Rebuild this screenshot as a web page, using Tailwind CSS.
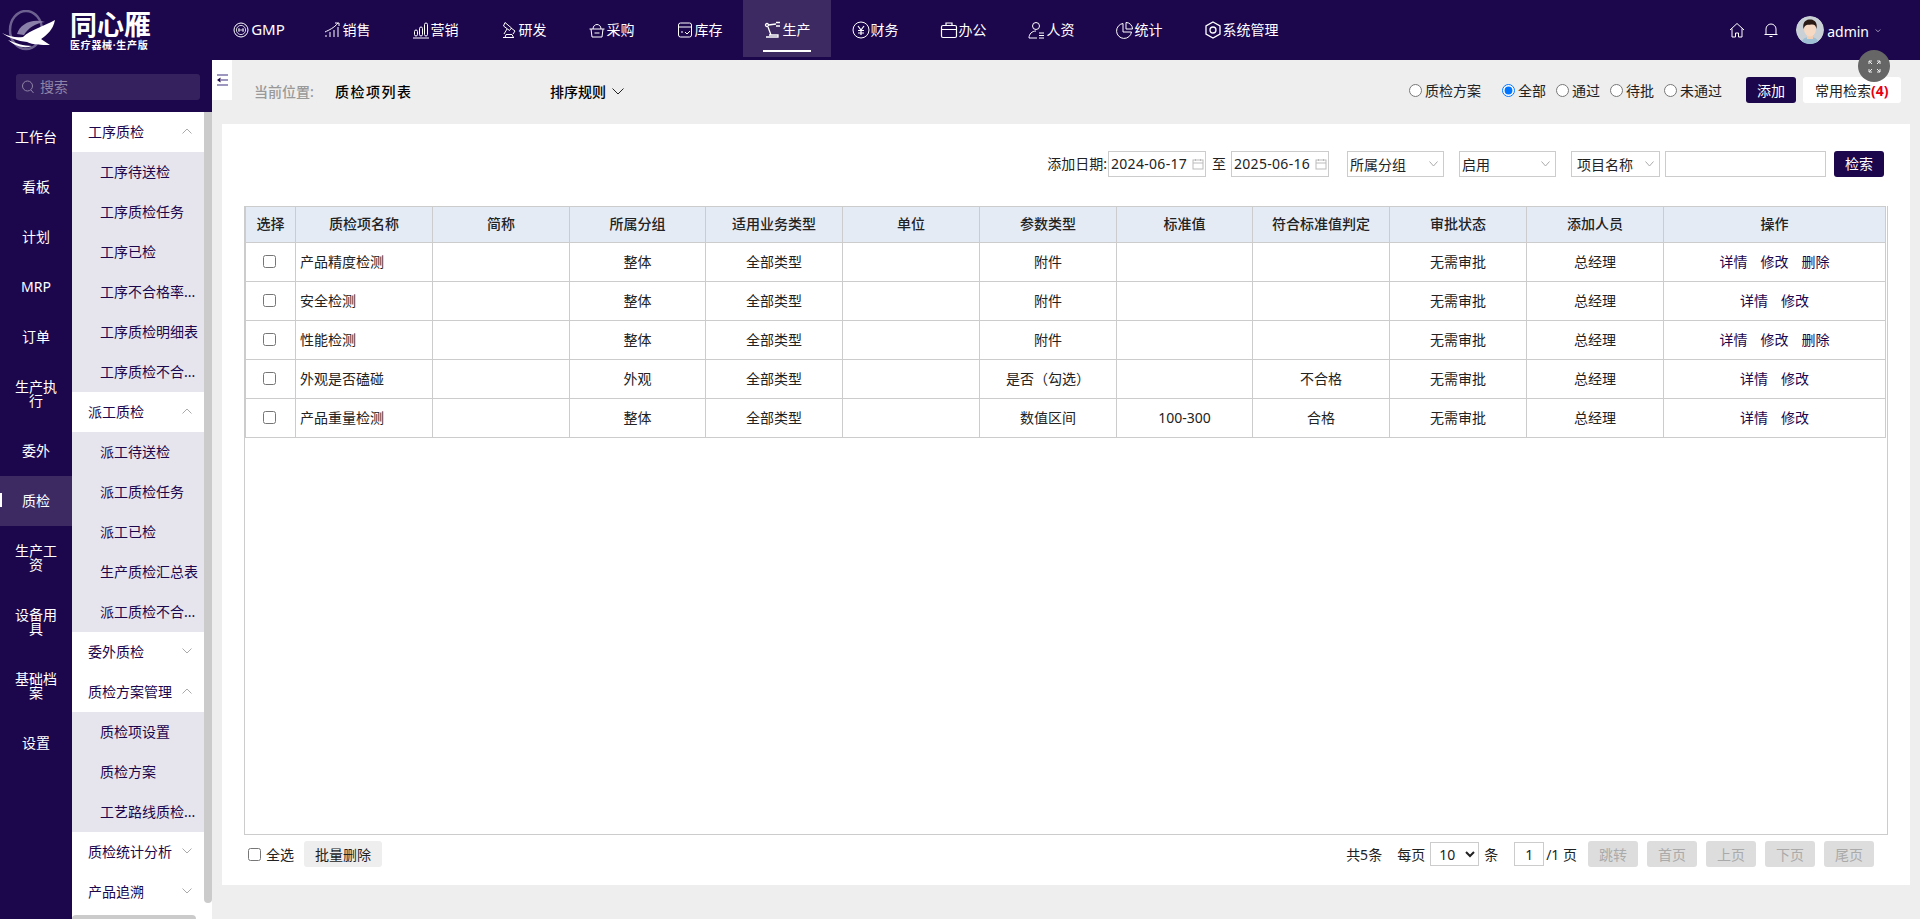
<!DOCTYPE html>
<html lang="zh">
<head>
<meta charset="utf-8">
<title>质检项列表</title>
<script src="https://cdn.jsdelivr.net/npm/@tailwindcss/browser@4"></script>
</head>
<body class="h-[919px] w-[1920px] overflow-hidden bg-[#eeeeee] text-[14px] text-[#222] font-['Noto_Sans','Noto_Sans_CJK_SC',sans-serif]">

<!-- top bar -->
<header class="flex h-[60px] items-center bg-[#1c064c] text-white">
  <div class="flex h-full w-[215px] shrink-0 items-start">
    <svg class="mt-[10px] h-[44px] w-[56px] shrink-0" viewBox="0 0 56 44" fill="none">
      <ellipse cx="26" cy="20" rx="16" ry="19" stroke="#6d6190" stroke-width="2.500"/>
      <path d="M17 24 C20 14 32 8 45 12 C36 13 28 18 24 25Z" fill="#8a7fa8"/>
      <path d="M2 23 C10 27 17 28 23 27 C30 20 44 16 55 10 C53 20 47 25 41 29 L50 35 C41 35 33 35 27 32 C18 31 9 28 2 23Z" fill="#fff"/>
      <path d="M8 30 C15 33 24 36 32 36 C24 39 15 36 8 30Z" fill="#fff"/>
    </svg>
    <div class="ml-[14px] w-[80px] pt-[13px]">
      <div class="text-[27px] font-bold leading-[24px] whitespace-nowrap">同心雁</div>
      <div class="mt-[3px] text-[10px] font-bold leading-[10px] tracking-[.7px] whitespace-nowrap">医疗器械·生产版</div>
    </div>
  </div>
  <nav class="flex h-full">
    <a class="flex h-[57px] w-[88px] items-center justify-center gap-[2px] pt-[2px]">
      <svg class="h-[16px] w-[16px]" viewBox="0 0 16 16" fill="none" stroke="#fff"><circle cx="8" cy="8" r="7"/><circle cx="8" cy="8" r="4.600" stroke-width=".8"/><path d="M5 8h6M6 6v4M10 6v4" stroke-width=".8"/></svg>
      <span class="text-[15px]">GMP</span>
    </a>
    <a class="flex h-[57px] w-[88px] items-center justify-center gap-[1px] pt-[2px]">
      <svg class="h-[18px] w-[18px]" viewBox="0 0 18 18" fill="none" stroke="#fff"><path d="M2 16v-2M6 16v-5M10 16V9M14 16V6M1 11C5 9 10 7 14 2M11 2h4v3"/></svg>
      <span>销售</span>
    </a>
    <a class="flex h-[57px] w-[88px] items-center justify-center gap-[1px] pt-[2px]">
      <svg class="h-[18px] w-[18px]" viewBox="0 0 18 18" fill="none" stroke="#fff"><rect x="2.500" y="9" width="3" height="6" rx="1.500"/><rect x="7.500" y="6" width="3" height="9" rx="1.500"/><rect x="12.500" y="2" width="3" height="13" rx="1.500"/><path d="M1 17h16"/></svg>
      <span>营销</span>
    </a>
    <a class="flex h-[57px] w-[88px] items-center justify-center gap-[1px] pt-[2px]">
      <svg class="h-[18px] w-[18px]" viewBox="0 0 18 18" fill="none" stroke="#fff"><path d="M5 1.500L3.500 5l6 4.500 2-2.500ZM7 8l-3 5M3 16.500h11M5 16.500l1-3h6l1.500 3M11 7l4 3-2 3"/></svg>
      <span>研发</span>
    </a>
    <a class="flex h-[57px] w-[88px] items-center justify-center gap-[1px] pt-[2px]">
      <svg class="h-[18px] w-[18px]" viewBox="0 0 18 18" fill="none" stroke="#fff"><path d="M1.500 8h15M3 8l1 8h10l1-8M5 8c0-6 8-6 8 0M6.500 12h5"/></svg>
      <span>采购</span>
    </a>
    <a class="flex h-[57px] w-[88px] items-center justify-center gap-[1px] pt-[2px]">
      <svg class="h-[18px] w-[18px]" viewBox="0 0 18 18" fill="none" stroke="#fff"><rect x="2.500" y="2" width="13" height="14" rx="2"/><path d="M2.500 6h13M5 11h2M9 11l2 2 3-3"/></svg>
      <span>库存</span>
    </a>
    <a class="relative flex h-[57px] w-[88px] items-center justify-center gap-[1px] bg-[#3d2a62] pt-[2px]">
      <svg class="h-[18px] w-[18px]" viewBox="0 0 18 18" fill="none" stroke="#fff" stroke-width="1.300"><circle cx="3" cy="4" r="1.500"/><path d="M4.500 4L12 3M12 1.500h4M12 5h4M4 6l3 8M2 16h12v-2H5"/></svg>
      <span>生产</span>
      <span class="absolute left-[20px] top-[50px] h-[2px] w-[48px] bg-white"></span>
    </a>
    <a class="flex h-[57px] w-[88px] items-center justify-center gap-[1px] pt-[2px]">
      <svg class="h-[18px] w-[18px]" viewBox="0 0 18 18" fill="none" stroke="#fff"><circle cx="9" cy="9" r="8"/><path d="M6 5l3 4 3-4M6 9.500h6M6 12h6M9 9v5" stroke-width="1.200"/></svg>
      <span>财务</span>
    </a>
    <a class="flex h-[57px] w-[88px] items-center justify-center gap-[1px] pt-[2px]">
      <svg class="h-[18px] w-[18px]" viewBox="0 0 18 18" fill="none" stroke="#fff" stroke-width="1.200"><rect x="1.500" y="4.500" width="15" height="12" rx="1.500"/><path d="M6 4.500V2h6v2.500M1.500 8.500h15"/></svg>
      <span>办公</span>
    </a>
    <a class="flex h-[57px] w-[88px] items-center justify-center gap-[1px] pt-[2px]">
      <svg class="h-[18px] w-[18px]" viewBox="0 0 18 18" fill="none" stroke="#fff"><circle cx="8" cy="5" r="3.500"/><path d="M1 17c0-4 3-7 7-7M1 17h8M11 12h5M11 14.500h5M11 17h5"/></svg>
      <span>人资</span>
    </a>
    <a class="flex h-[57px] w-[88px] items-center justify-center gap-[1px] pt-[2px]">
      <svg class="h-[18px] w-[18px]" viewBox="0 0 18 18" fill="none" stroke="#fff"><path d="M7 2.500a7.500 7.500 0 1 0 8.500 8.500"/><path d="M7 2.500V11h8.500"/><path d="M10 1.500a6.500 6.500 0 0 1 6.500 6.500H10Z"/></svg>
      <span>统计</span>
    </a>
    <a class="flex h-[57px] w-[116px] items-center justify-center gap-[1px] pt-[2px]">
      <svg class="h-[18px] w-[18px]" viewBox="0 0 18 18" fill="none" stroke="#fff" stroke-width="1.300"><path d="M9 1l7 4v8l-7 4-7-4V5Z"/><circle cx="9" cy="9" r="3"/></svg>
      <span>系统管理</span>
    </a>
  </nav>
  <div class="ml-auto flex items-center pr-[39px]">
    <svg class="h-[16px] w-[16px]" viewBox="0 0 16 16" fill="none" stroke="#fff"><path d="M1 8l7-6.500L15 8M3 6.500V15h3.500v-4h3v4H13V6.500"/></svg>
    <svg class="ml-[19px] h-[16px] w-[14px]" viewBox="0 0 14 16" fill="none" stroke="#fff"><path d="M2 12V7a5 5 0 0 1 10 0v5M.5 12.500h13M5.500 14.500h3"/></svg>
    <svg class="ml-[18px] h-[28px] w-[28px] rounded-full" viewBox="0 0 28 28">
      <circle cx="14" cy="14" r="14" fill="#c9d0d6"/>
      <path d="M5 28c1-6 5-7 9-7s8 1 9 7Z" fill="#9fc0d4"/>
      <rect x="11" y="16" width="6" height="7" fill="#f2cfb4"/>
      <ellipse cx="14" cy="13" rx="6" ry="7.500" fill="#f6d9c2"/>
      <path d="M7.500 13C6 5 11 3.500 14 3.500S22 5 20.500 13C20 9 18 8 15 8.500 12 9 9 8 7.500 13Z" fill="#2a1a14"/>
    </svg>
    <span class="ml-[3px] pt-[2px]">admin</span>
    <svg class="ml-[6px] mt-[2px] h-[6px] w-[6px]" viewBox="0 0 8 6" fill="none" stroke="#cfc9dc"><path d="M1 1l3 3 3-3"/></svg>
  </div>
</header>

<!-- fullscreen button -->
<div class="absolute left-[1858px] top-[50px] z-10 flex h-[32px] w-[32px] items-center justify-center rounded-full bg-[#666]">
  <svg class="h-[13px] w-[13px]" viewBox="0 0 13 13" fill="none" stroke="#eee"><path d="M1 4V1h3M9 1h3v3M1 9v3h3M12 9v3H9M1 1l3 3M12 1L9 4M1 12l3-3M12 12L9 9"/></svg>
</div>

<div class="flex h-[859px]">
  <!-- left menu -->
  <aside class="flex h-full w-[212px] shrink-0 flex-col">
    <div class="flex h-[52px] w-[212px] shrink-0 items-start bg-[#1c064c] pl-[16px] pt-[14px]">
      <div class="flex h-[26px] w-[184px] items-center rounded-[3px] bg-[#35215d] pl-[5px] text-[#8f84a8]">
        <svg class="h-[14px] w-[14px]" viewBox="0 0 14 14" fill="none" stroke="#8f84a8"><circle cx="6.500" cy="6" r="5"/><path d="M10 10l2.500 3"/></svg>
        <span class="ml-[5px] pb-[2px]">搜索</span>
      </div>
    </div>
    <div class="relative flex min-h-0 flex-1">
      <div class="flex w-[72px] shrink-0 flex-col bg-[#1c064c] text-center leading-[14px] text-white">
        <a class="flex h-[50px] items-center justify-center">工作台</a>
        <a class="flex h-[50px] items-center justify-center">看板</a>
        <a class="flex h-[50px] items-center justify-center">计划</a>
        <a class="flex h-[50px] items-center justify-center">MRP</a>
        <a class="flex h-[50px] items-center justify-center">订单</a>
        <a class="flex h-[64px] items-center justify-center px-[14px]">生产执行</a>
        <a class="flex h-[50px] items-center justify-center">委外</a>
        <a class="relative flex h-[50px] items-center justify-center bg-[#3d2a62]"><span class="absolute left-0 top-[17px] h-[14px] w-[2px] bg-white"></span>质检</a>
        <a class="flex h-[64px] items-center justify-center px-[14px]">生产工资</a>
        <a class="flex h-[64px] items-center justify-center px-[14px]">设备用具</a>
        <a class="flex h-[64px] items-center justify-center px-[14px]">基础档案</a>
        <a class="flex h-[50px] items-center justify-center">设置</a>
      </div>
      <div class="w-[132px] shrink-0 overflow-hidden bg-white text-[#1c064c] [&_div.flex]:pb-[2px]">
        <div class="flex h-[40px] items-center justify-between pl-[16px] pr-[12px]">工序质检<svg class="h-[6px] w-[10px]" viewBox="0 0 10 6" fill="none" stroke="#aaa"><path d="M.5 5.500L5 1l4.500 4.500"/></svg></div>
        <div class="bg-[#e6e5ee]">
          <div class="flex h-[40px] items-center pl-[28px] whitespace-nowrap">工序待送检</div>
          <div class="flex h-[40px] items-center pl-[28px] whitespace-nowrap">工序质检任务</div>
          <div class="flex h-[40px] items-center pl-[28px] whitespace-nowrap">工序已检</div>
          <div class="flex h-[40px] items-center pl-[28px] whitespace-nowrap">工序不合格率...</div>
          <div class="flex h-[40px] items-center pl-[28px] whitespace-nowrap">工序质检明细表</div>
          <div class="flex h-[40px] items-center pl-[28px] whitespace-nowrap">工序质检不合...</div>
        </div>
        <div class="flex h-[40px] items-center justify-between pl-[16px] pr-[12px]">派工质检<svg class="h-[6px] w-[10px]" viewBox="0 0 10 6" fill="none" stroke="#aaa"><path d="M.5 5.500L5 1l4.500 4.500"/></svg></div>
        <div class="bg-[#e6e5ee]">
          <div class="flex h-[40px] items-center pl-[28px] whitespace-nowrap">派工待送检</div>
          <div class="flex h-[40px] items-center pl-[28px] whitespace-nowrap">派工质检任务</div>
          <div class="flex h-[40px] items-center pl-[28px] whitespace-nowrap">派工已检</div>
          <div class="flex h-[40px] items-center pl-[28px] whitespace-nowrap">生产质检汇总表</div>
          <div class="flex h-[40px] items-center pl-[28px] whitespace-nowrap">派工质检不合...</div>
        </div>
        <div class="flex h-[40px] items-center justify-between pl-[16px] pr-[12px]">委外质检<svg class="h-[6px] w-[10px]" viewBox="0 0 10 6" fill="none" stroke="#aaa"><path d="M.5.500L5 5l4.500-4.500"/></svg></div>
        <div class="flex h-[40px] items-center justify-between pl-[16px] pr-[12px]">质检方案管理<svg class="h-[6px] w-[10px]" viewBox="0 0 10 6" fill="none" stroke="#aaa"><path d="M.5 5.500L5 1l4.500 4.500"/></svg></div>
        <div class="bg-[#e6e5ee]">
          <div class="flex h-[40px] items-center pl-[28px] whitespace-nowrap">质检项设置</div>
          <div class="flex h-[40px] items-center pl-[28px] whitespace-nowrap">质检方案</div>
          <div class="flex h-[40px] items-center pl-[28px] whitespace-nowrap">工艺路线质检...</div>
        </div>
        <div class="flex h-[40px] items-center justify-between pl-[16px] pr-[12px]">质检统计分析<svg class="h-[6px] w-[10px]" viewBox="0 0 10 6" fill="none" stroke="#aaa"><path d="M.5.500L5 5l4.500-4.500"/></svg></div>
        <div class="flex h-[40px] items-center justify-between pl-[16px] pr-[12px]">产品追溯<svg class="h-[6px] w-[10px]" viewBox="0 0 10 6" fill="none" stroke="#aaa"><path d="M.5.500L5 5l4.500-4.500"/></svg></div>
      </div>
      <!-- scrollbars -->
      <div class="w-[8px] shrink-0 bg-white"><div class="h-[791px] rounded-b-[4px] bg-[#cbcbcb]"></div></div>
      <div class="absolute bottom-0 left-[72px] h-[4px] w-[124px] rounded-t-[4px] bg-[#cbcbcb]"></div>
    </div>
  </aside>

  <!-- main -->
  <main class="relative min-w-0 flex-1">
    <button class="absolute left-0 top-0 flex h-[40px] w-[20px] items-center justify-center bg-white">
      <svg class="h-[14px] w-[11px]" viewBox="0 0 11 14" fill="#9d97c0"><rect y="1" width="11" height="2"/><rect x="4" y="6" width="7" height="2"/><rect y="11" width="11" height="2"/><path d="M0 7l3.500-2.500v5Z" fill="#1c064c"/></svg>
    </button>

    <div class="flex h-[60px] items-center pl-[42px] pr-[19px]">
      <span class="mt-[2px] w-[81px] font-medium text-[#999]">当前位置:</span>
      <span class="mt-[2px] w-[215px] font-medium tracking-[1.5px] text-black">质检项列表</span>
      <span class="mt-[2px] font-medium text-black">排序规则</span>
      <svg class="ml-[6px] mt-[2px] h-[7px] w-[12px]" viewBox="0 0 12 7" fill="none" stroke="#222"><path d="M.5.500L6 6l5.500-5.500"/></svg>
      <div class="ml-auto flex items-center">
        <label class="flex items-center"><input type="radio" name="kind" class="m-0 h-[13px] w-[13px]"><span class="ml-[3px]">质检方案</span></label>
        <label class="ml-[21px] flex items-center"><input type="radio" name="status" checked class="m-0 h-[13px] w-[13px]"><span class="ml-[3px]">全部</span></label>
        <label class="ml-[10px] flex items-center"><input type="radio" name="status" class="m-0 h-[13px] w-[13px]"><span class="ml-[3px]">通过</span></label>
        <label class="ml-[10px] flex items-center"><input type="radio" name="status" class="m-0 h-[13px] w-[13px]"><span class="ml-[3px]">待批</span></label>
        <label class="ml-[10px] flex items-center"><input type="radio" name="status" class="m-0 h-[13px] w-[13px]"><span class="ml-[3px]">未通过</span></label>
        <button class="ml-[24px] h-[26px] w-[50px] rounded-[3px] bg-[#1c064c] text-white">添加</button>
        <button class="ml-[7px] h-[26px] w-[98px] rounded-[3px] bg-white pl-[12px] text-left">常用检索<b class="text-[#e60012]">(4)</b></button>
      </div>
    </div>

    <section class="ml-[10px] mr-[10px] mt-[4px] h-[761px] bg-white pt-[27px]">
      <!-- filters -->
      <div class="flex h-[26px] items-center pr-[26px]">
        <span class="ml-auto pb-[2px]">添加日期:</span>
        <div class="relative ml-[1px] w-[98px]">
          <input value="2024-06-17" class="h-[26px] w-full border border-[#ccc] pb-[2px] pl-[2px] tracking-[.3px] outline-none">
          <svg class="absolute right-[2px] top-[7px] h-[12px] w-[12px]" viewBox="0 0 12 12" fill="none" stroke="#bbb"><rect x="1" y="2" width="10" height="9"/><path d="M1 5h10M3.500 1v2M8.500 1v2"/></svg>
        </div>
        <span class="ml-[6px] pb-[2px]">至</span>
        <div class="relative ml-[5px] w-[98px]">
          <input value="2025-06-16" class="h-[26px] w-full border border-[#ccc] pb-[2px] pl-[2px] tracking-[.3px] outline-none">
          <svg class="absolute right-[2px] top-[7px] h-[12px] w-[12px]" viewBox="0 0 12 12" fill="none" stroke="#bbb"><rect x="1" y="2" width="10" height="9"/><path d="M1 5h10M3.500 1v2M8.500 1v2"/></svg>
        </div>
        <div class="relative ml-[18px] w-[97px]">
          <select class="h-[26px] w-full appearance-none border border-[#ccc] bg-white pl-[2px]"><option>所属分组</option></select>
          <svg class="pointer-events-none absolute right-[6px] top-[10px] h-[6px] w-[9px]" viewBox="0 0 9 6" fill="none" stroke="#aaa"><path d="M.5.500l4 4.500 4-4.500"/></svg>
        </div>
        <div class="relative ml-[15px] w-[97px]">
          <select class="h-[26px] w-full appearance-none border border-[#ccc] bg-white pl-[2px]"><option>启用</option></select>
          <svg class="pointer-events-none absolute right-[6px] top-[10px] h-[6px] w-[9px]" viewBox="0 0 9 6" fill="none" stroke="#aaa"><path d="M.5.500l4 4.500 4-4.500"/></svg>
        </div>
        <div class="relative ml-[15px] w-[89px]">
          <select class="h-[26px] w-full appearance-none border border-[#ccc] bg-white pl-[5px]"><option>项目名称</option></select>
          <svg class="pointer-events-none absolute right-[6px] top-[10px] h-[6px] w-[9px]" viewBox="0 0 9 6" fill="none" stroke="#aaa"><path d="M.5.500l4 4.500 4-4.500"/></svg>
        </div>
        <input class="ml-[5px] h-[26px] w-[161px] border border-[#ccc] outline-none">
        <button class="ml-[8px] h-[26px] w-[50px] rounded-[3px] bg-[#1c064c] pb-[2px] text-white">检索</button>
      </div>

      <!-- table -->
      <div class="ml-[22px] mr-[22px] mt-[29px] h-[629px] border border-[#ccc] border-t-0">
        <table class="w-[1640px] table-fixed border-collapse text-center [&_td]:border [&_td]:border-[#ccc] [&_td]:p-0 [&_td]:pb-[2px] [&_th]:border [&_th]:border-[#ccc] [&_th]:p-0 [&_th]:pb-[2px]">
          <colgroup>
            <col class="w-[50px]"><col class="w-[137px]"><col class="w-[137px]"><col class="w-[136px]"><col class="w-[137px]"><col class="w-[137px]"><col class="w-[137px]"><col class="w-[136px]"><col class="w-[137px]"><col class="w-[137px]"><col class="w-[137px]"><col class="w-[222px]">
          </colgroup>
          <thead>
            <tr class="h-[36px] bg-[#e5ebf5] [&_th]:font-medium">
              <th>选择</th><th>质检项名称</th><th>简称</th><th>所属分组</th><th>适用业务类型</th><th>单位</th><th>参数类型</th><th>标准值</th><th>符合标准值判定</th><th>审批状态</th><th>添加人员</th><th>操作</th>
            </tr>
          </thead>
          <tbody>
            <tr class="h-[39px]">
              <td><input type="checkbox" class="mb-[2px] mr-[2px] h-[13px] w-[13px] align-middle"></td><td class="pl-[4px]! text-left">产品精度检测</td><td></td><td>整体</td><td>全部类型</td><td></td><td>附件</td><td></td><td></td><td>无需审批</td><td>总经理</td>
              <td class="text-[#1c064c]"><a>详情</a><a class="ml-[13px]">修改</a><a class="ml-[13px]">删除</a></td>
            </tr>
            <tr class="h-[39px]">
              <td><input type="checkbox" class="mb-[2px] mr-[2px] h-[13px] w-[13px] align-middle"></td><td class="pl-[4px]! text-left">安全检测</td><td></td><td>整体</td><td>全部类型</td><td></td><td>附件</td><td></td><td></td><td>无需审批</td><td>总经理</td>
              <td class="text-[#1c064c]"><a>详情</a><a class="ml-[13px]">修改</a></td>
            </tr>
            <tr class="h-[39px]">
              <td><input type="checkbox" class="mb-[2px] mr-[2px] h-[13px] w-[13px] align-middle"></td><td class="pl-[4px]! text-left">性能检测</td><td></td><td>整体</td><td>全部类型</td><td></td><td>附件</td><td></td><td></td><td>无需审批</td><td>总经理</td>
              <td class="text-[#1c064c]"><a>详情</a><a class="ml-[13px]">修改</a><a class="ml-[13px]">删除</a></td>
            </tr>
            <tr class="h-[39px]">
              <td><input type="checkbox" class="mb-[2px] mr-[2px] h-[13px] w-[13px] align-middle"></td><td class="pl-[4px]! text-left">外观是否磕碰</td><td></td><td>外观</td><td>全部类型</td><td></td><td>是否（勾选）</td><td></td><td>不合格</td><td>无需审批</td><td>总经理</td>
              <td class="text-[#1c064c]"><a>详情</a><a class="ml-[13px]">修改</a></td>
            </tr>
            <tr class="h-[39px]">
              <td><input type="checkbox" class="mb-[2px] mr-[2px] h-[13px] w-[13px] align-middle"></td><td class="pl-[4px]! text-left">产品重量检测</td><td></td><td>整体</td><td>全部类型</td><td></td><td>数值区间</td><td>100-300</td><td>合格</td><td>无需审批</td><td>总经理</td>
              <td class="text-[#1c064c]"><a>详情</a><a class="ml-[13px]">修改</a></td>
            </tr>
          </tbody>
        </table>
      </div>

      <!-- footer -->
      <div class="ml-[26px] mt-[6px] flex h-[26px] items-center pr-[36px]">
        <input type="checkbox" class="m-0 h-[13px] w-[13px]">
        <span class="ml-[5px]">全选</span>
        <button class="ml-[10px] h-[26px] w-[78px] rounded-[3px] bg-[#eeeeee]">批量删除</button>
        <span class="ml-auto">共5条</span>
        <span class="ml-[15px]">每页</span>
        <select class="ml-[5px] h-[24px] w-[49px] border border-[#ccc] bg-white pl-[4px]"><option>10</option></select>
        <span class="ml-[5px]">条</span>
        <input value="1" class="ml-[16px] h-[24px] w-[30px] border border-[#ccc] text-center outline-none">
        <span class="ml-[2px]">/1 页</span>
        <button class="ml-[11px] h-[26px] w-[50px] rounded-[3px] bg-[#dddddd] text-[#aaa]">跳转</button>
        <button class="ml-[9px] h-[26px] w-[50px] rounded-[3px] bg-[#dddddd] text-[#aaa]">首页</button>
        <button class="ml-[9px] h-[26px] w-[50px] rounded-[3px] bg-[#dddddd] text-[#aaa]">上页</button>
        <button class="ml-[9px] h-[26px] w-[50px] rounded-[3px] bg-[#dddddd] text-[#aaa]">下页</button>
        <button class="ml-[9px] h-[26px] w-[50px] rounded-[3px] bg-[#dddddd] text-[#aaa]">尾页</button>
      </div>
    </section>
  </main>
</div>
</body>
</html>
